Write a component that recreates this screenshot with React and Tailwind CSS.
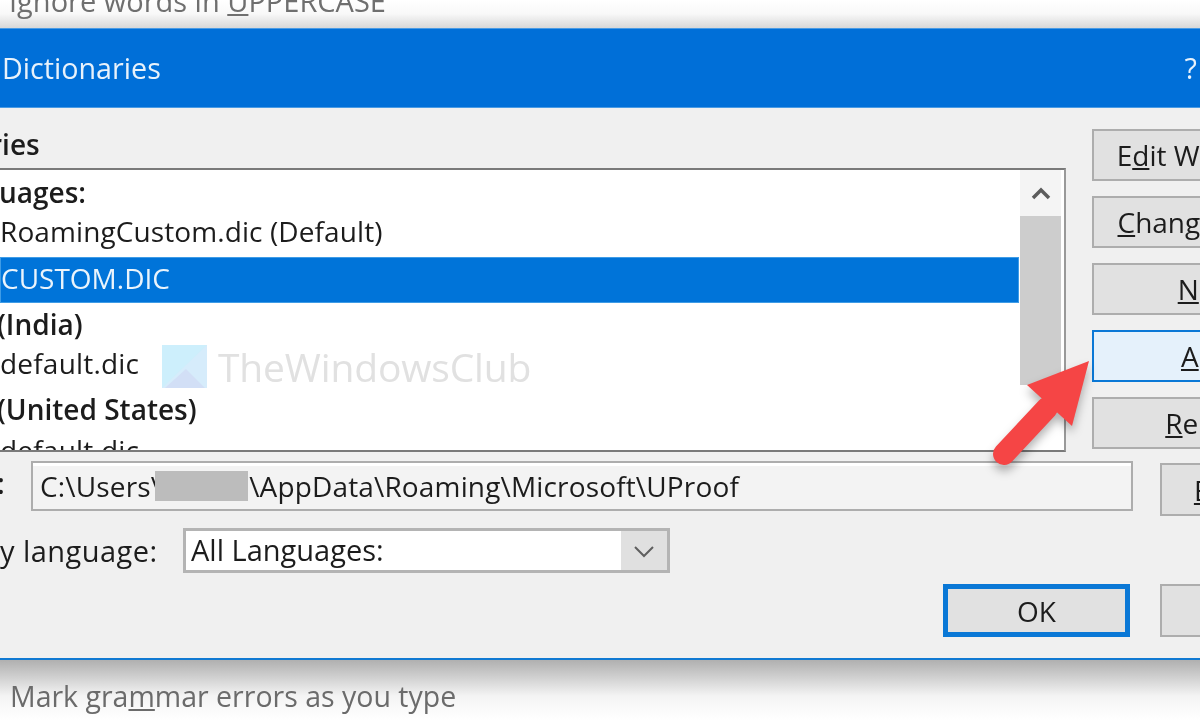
import React from 'react';

const listRows = [
    { text: 'uages:', className: 'h-[44px] font-semibold -ml-[1px]' },
    { text: 'RoamingCustom.dic (Default)', className: 'h-[43px] pb-[10px] tracking-[0.1px]' },
    { text: 'CUSTOM.DIC', className: 'h-[46px] pb-[5px] bg-[#0074d9] text-[#eaf4fc] border border-[#3f9ce6]' },
    { text: '(India)', className: 'h-[42px] font-semibold -ml-[3px]' },
    { text: 'default.dic', className: 'h-[40px] pb-[4px] tracking-[0.2px]' },
    { text: '(United States)', className: 'h-[45px] pt-[3px] font-semibold -ml-[3px]' },
    { text: 'default.dic', className: 'h-[40px] tracking-[0.2px]' },
];

const sideButtons = [
    { key: 'edit', first: 'E', under: 'd', rest: 'it Word List...' },
    { key: 'change', first: '', under: 'C', rest: 'hange Default' },
    { key: 'new', first: '', under: 'N', rest: 'ew...' },
    { key: 'add', first: '', under: 'A', rest: 'dd...', active: true },
    { key: 'remove', first: '', under: 'R', rest: 'emove' },
];

const Watermark = () => (
    <div className="absolute left-[162px] top-[345px] flex items-center gap-[11px]">
        <svg width="45" height="43" viewBox="0 0 45 43">
            <rect width="45" height="43" fill="#cdeffc" />
            <polygon points="45,0 45,43 0,43" fill="#d6ecfb" />
            <polygon points="3,43 24,24 43,43" fill="#d2dff6" />
        </svg>
        <span className="text-[39px] leading-none text-[#e1e1e1] tracking-[-0.15px]">TheWindowsClub</span>
    </div>
);

const Arrow = () => (
    <svg className="absolute left-[980px] top-[350px] drop-shadow-[0_6px_5px_rgba(0,0,0,0.3)]" width="120" height="125" viewBox="0 0 120 125">
        <line x1="24" y1="104" x2="67" y2="58" stroke="#f54545" strokeWidth="22" strokeLinecap="round" />
        <polygon points="109,11 47,35 92,76" fill="#f54545" />
    </svg>
);

const App = () => {
    return (
        <div className="relative w-[1200px] h-[720px] overflow-hidden bg-white flex flex-col text-[28px] text-[#1c1c1c] blur-[0.6px]" style={{ fontFamily: '"Open Sans", sans-serif' }}>
            {/* word options dialog behind, just the tail of it */}
            <div className="h-[28px] shrink-0 overflow-hidden pl-[9px] bg-gradient-to-b from-white via-[#f8f8f8] to-[#d8d8d8] text-[#6f6f6f] text-[29px]">
                <div className="-mt-[13px] leading-[28px]">Ignore words in <span className="underline">U</span>PPERCASE</div>
            </div>

            <div className="h-[80px] shrink-0 flex items-center justify-between pl-[2px] pr-[3px] bg-[#006fd8] border-y border-[#4a9be4] text-[#e8f2fb] text-[28.7px]">
                <span>Dictionaries</span>
                <span>?</span>
            </div>

            <div className="h-[552px] shrink-0 pt-[21px] bg-[#f0f0f0] border-b-2 border-[#1079d2] flex flex-col">
                <div className="flex">
                    <div className="w-[1066px] shrink-0">
                        <div className="h-[39px] -ml-[10px] font-semibold leading-[30px]">ries</div>
                        <div className="h-[284px] flex bg-white border-2 border-l-0 border-t-[#7a7a7a] border-b-[#7a7a7a] border-r-[#999999] pr-[3px]">
                            <div className="flex-1 flex flex-col overflow-hidden">
                                {listRows.map((row, i) => (
                                    <div key={i} className={`shrink-0 flex items-center ${row.className}`}>{row.text}</div>
                                ))}
                            </div>
                            <div className="w-[41px] ml-[1px] shrink-0 flex flex-col">
                                <div className="h-[46px] flex items-center justify-center bg-[#f4f4f4]">
                                    <svg width="20" height="14" viewBox="0 0 20 14" fill="none" stroke="#5c5c5c" strokeWidth="3.5">
                                        <path d="M2 12 L10 4 L18 12" />
                                    </svg>
                                </div>
                                <div className="h-[169px] bg-[#cdcdcd]"></div>
                            </div>
                        </div>
                    </div>
                    <div className="ml-[26px] flex flex-col gap-[15px] shrink-0">
                        {sideButtons.map((b) => (
                            <div key={b.key} className={`w-[252px] h-[52px] flex items-center justify-center border-2 ${b.active ? 'bg-[#e5f1fb] border-[#0a78d6]' : 'bg-[#e1e1e1] border-[#adadad]'}`}>
                                <span>{b.first}<span className="underline">{b.under}</span>{b.rest}</span>
                            </div>
                        ))}
                    </div>
                </div>

                <div className="mt-[9px] flex items-start">
                    <span className="w-[34px] shrink-0 -ml-[3px] mt-[6px] leading-[32px] font-semibold">:</span>
                    <div className="w-[1102px] h-[50px] shrink-0 flex items-center pl-[7px] bg-[#f3f3f3] border-2 border-[#adadad] shadow-[inset_0_3px_0_#ffffff] tracking-[0.15px]">
                        <span>C:\Users\</span>
                        <span className="w-[93px] h-[30px] shrink-0 -ml-[6px] mr-[1px] bg-[#bcbcbc]"></span>
                        <span>\AppData\Roaming\Microsoft\UProof</span>
                    </div>
                    <div className="w-[187px] h-[53px] mt-[2px] ml-[27px] shrink-0 flex items-center justify-center bg-[#e1e1e1] border-2 border-[#adadad]">
                        <span><span className="underline">B</span>rowse...</span>
                    </div>
                </div>

                <div className="mt-[12px] flex items-center h-[45px] text-[29px]">
                    <span className="w-[183px] shrink-0 tracking-[0.45px]"><span>y lan</span><span className="underline">g</span><span>uage:</span></span>
                    <div className="w-[487px] h-[45px] shrink-0 flex bg-white border-[3px] border-[#b4b4b4]">
                        <span className="flex-1 pl-[5px] leading-[38px]">All Languages:</span>
                        <span className="w-[46px] flex items-center justify-center bg-[#e0e0e0]">
                            <svg width="22" height="14" viewBox="0 0 22 14" fill="none" stroke="#5f5f5f" strokeWidth="2">
                                <path d="M2 3 L11 12 L20 3" />
                            </svg>
                        </span>
                    </div>
                </div>

                <div className="mt-[11px] flex items-start pl-[943px]">
                    <div className="w-[187px] h-[53px] shrink-0 flex items-center justify-center bg-[#e1e1e1] border-[5px] border-[#0a78d6]">OK</div>
                    <div className="w-[187px] h-[53px] ml-[30px] shrink-0 bg-[#e1e1e1] border-2 border-[#adadad]"></div>
                </div>
            </div>

            <div className="flex-1 pl-[10px] pt-[18px] bg-gradient-to-b from-[#b0b0b0] via-[#f4f4f4] via-60% to-white text-[#6b6b6b] text-[28.5px] leading-[36px]">
                Mark gra<span className="underline">m</span>mar errors as you type
            </div>

            <Watermark />
            <Arrow />
        </div>
    );
};

export default App;
